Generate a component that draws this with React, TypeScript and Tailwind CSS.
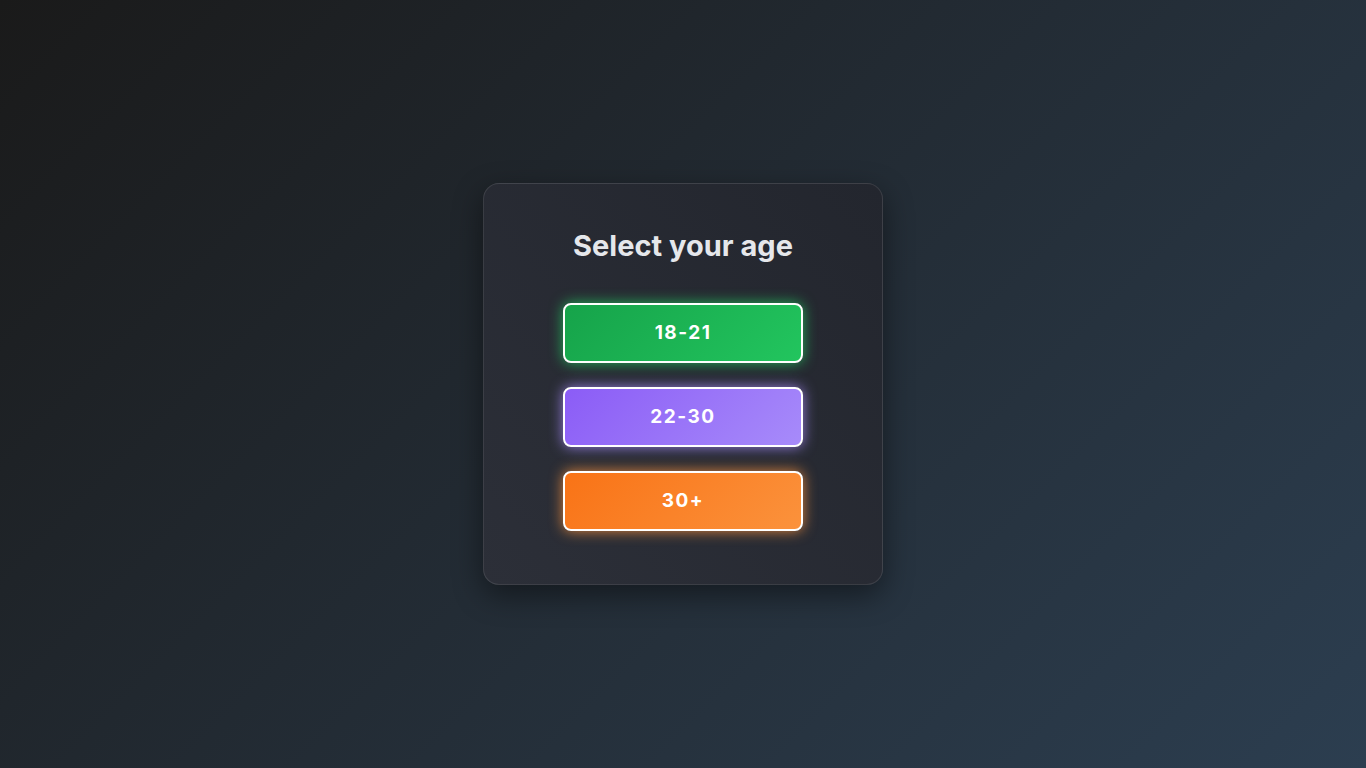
import React from "react";

export default function App() {
  return (
    <div
      className="w-full h-screen flex items-center justify-center bg-[linear-gradient(135deg,#1a1a1a_0%,#2c3e50_100%)]"
      style={{ fontFamily: "Inter, 'Noto Sans', sans-serif" }}
    >
      <div className="w-[400px] h-[402px] rounded-[16px] border border-white/10 bg-[linear-gradient(225deg,#23262e_0%,#2c2f38_100%)] shadow-[0_10px_30px_rgba(0,0,0,0.45)] flex flex-col items-center pt-[43px]">
        <h1 className="text-[29px] leading-[38px] font-bold text-[#e5e7eb]">
          Select your age
        </h1>
        <div className="mt-[38px] flex flex-col gap-[24px]">
          <button className="w-[240px] h-[60px] rounded-[8px] border-2 border-white text-white font-bold text-[19px] tracking-[1.5px] bg-[linear-gradient(135deg,#16a34a_0%,#22c55e_100%)] shadow-[0_0_14px_rgba(34,197,94,0.85)]">
            18-21
          </button>
          <button className="w-[240px] h-[60px] rounded-[8px] border-2 border-white text-white font-bold text-[19px] tracking-[1.5px] bg-[linear-gradient(135deg,#8b5cf6_0%,#a78bfa_100%)] shadow-[0_0_14px_rgba(167,139,250,0.85)]">
            22-30
          </button>
          <button className="w-[240px] h-[60px] rounded-[8px] border-2 border-white text-white font-bold text-[19px] tracking-[1.5px] bg-[linear-gradient(135deg,#f97316_0%,#fb923c_100%)] shadow-[0_0_14px_rgba(251,146,60,0.85)]">
            30+
          </button>
        </div>
      </div>
    </div>
  );
}
